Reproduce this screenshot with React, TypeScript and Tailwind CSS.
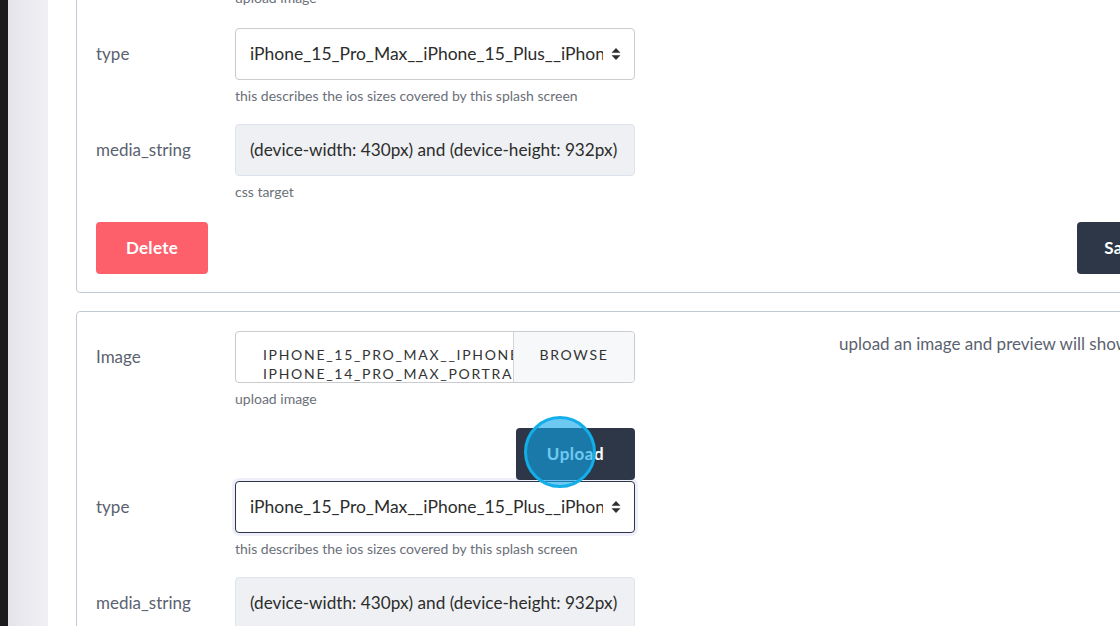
import React from "react";

const font = { fontFamily: "Lato, 'Liberation Sans', sans-serif" };

const selectText = "iPhone_15_Pro_Max__iPhone_15_Plus__iPhone_15__iPhone_14_Pro_Max";
const mediaText = "(device-width: 430px) and (device-height: 932px)";

function Arrows() {
  return (
    <svg width="10" height="14" viewBox="0 0 10 14" className="shrink-0 text-[#2f2f2f]">
      <path d="M5 1 L9.5 5.8 H0.5 Z" fill="currentColor" />
      <path d="M5 13 L9.5 8.2 H0.5 Z" fill="currentColor" />
    </svg>
  );
}

function Label({ children }: { children: React.ReactNode }) {
  return <div className="w-[139px] h-[52px] flex items-center text-[17px] text-[#5b6270]">{children}</div>;
}

function Help({ children }: { children: React.ReactNode }) {
  return <div className="mt-[6px] h-[20px] leading-[20px] text-[14px] text-[#6b7079]">{children}</div>;
}

function TypeSelect({ focused }: { focused?: boolean }) {
  return (
    <div
      className={`w-[400px] h-[52px] rounded-[4px] bg-white flex items-center pl-[14px] pr-[13px] gap-[8px] ${
        focused
          ? "border border-[#2d3748] shadow-[0_0_0_3px_rgba(120,120,220,0.12)]"
          : "border border-[#c9cbcf]"
      }`}
    >
      <div className="flex-1 overflow-hidden whitespace-nowrap text-[17.5px] text-[#2c2c2c]">{selectText}</div>
      <Arrows />
    </div>
  );
}

function MediaInput() {
  return (
    <div className="w-[400px] h-[52px] rounded-[4px] bg-[#eef0f3] border border-[#dde3ef] flex items-center px-[14px] text-[17.2px] text-[#2c2c2c] whitespace-nowrap overflow-hidden">
      {mediaText}
    </div>
  );
}

function TypeRow({ focused }: { focused?: boolean }) {
  return (
    <div className="flex items-start">
      <Label>type</Label>
      <div>
        <TypeSelect focused={focused} />
        <Help>this describes the ios sizes covered by this splash screen</Help>
      </div>
    </div>
  );
}

function MediaRow({ help = true }: { help?: boolean }) {
  return (
    <div className="flex items-start">
      <Label>media_string</Label>
      <div>
        <MediaInput />
        {help && <Help>css target</Help>}
      </div>
    </div>
  );
}

export default function App() {
  return (
    <div className="flex w-[1120px] h-[626px] overflow-hidden bg-white" style={font}>
      <div className="w-[8px] shrink-0 bg-[#1b1b1d]" />
      <div className="w-[40px] shrink-0 bg-gradient-to-r from-[#e4e4ea] to-[#f1f1f5]" />
      <div className="flex-1 pl-[28px] -mt-[13px] overflow-hidden">
        {/* card 1, scrolled so the top is out of view */}
        <div className="w-[1112px] border border-[#c4cad3] rounded-[4px] px-[19px] pb-[18px]">
          <div className="pl-[139px] h-[20px] leading-[20px] text-[14px] text-[#6b7079]">upload image</div>
          <div className="mt-[20px]">
            <TypeRow />
          </div>
          <div className="mt-[18px]">
            <MediaRow />
          </div>
          <div className="mt-[20px] flex justify-between">
            <button className="w-[112px] h-[52px] rounded-[4px] bg-[#fd5f6b] text-white text-[17px] font-bold tracking-[0.3px]">
              Delete
            </button>
            <button className="w-[91px] h-[52px] rounded-[4px] bg-[#2d3748] text-white text-[17px] font-bold tracking-[0.3px]">
              Save
            </button>
          </div>
        </div>

        {/* card 2 */}
        <div className="mt-[18px] w-[1112px] border border-[#c4cad3] rounded-[4px] px-[19px] pt-[19px] flex">
          <div className="w-[539px] shrink-0">
            <div className="flex items-start">
              <Label>Image</Label>
              <div>
                <div className="relative w-[400px] h-[52px] rounded-[4px] border border-[#c9cbcf] bg-white flex overflow-hidden">
                  <div className="flex-1 overflow-hidden pl-[27px] pt-[13px] text-[14px] leading-[19px] tracking-[1.7px] text-[#333] whitespace-nowrap">
                    <div>IPHONE_15_PRO_MAX__IPHONE_15_PLUS__IPHONE_15_PRO__</div>
                    <div>IPHONE_14_PRO_MAX_PORTRAIT.PNG</div>
                  </div>
                  <div className="w-[121px] shrink-0 border-l border-[#d2d4d8] bg-[#f7f8fa] flex justify-center pt-[13px] text-[14px] leading-[19px] tracking-[1.7px] text-[#333]">
                    BROWSE
                  </div>
                </div>
                <Help>upload image</Help>
              </div>
            </div>
            <div className="mt-[19px] flex justify-end">
              <div className="relative">
                <button className="w-[119px] h-[52px] rounded-[4px] bg-[#2d3748] text-white text-[17px] font-bold tracking-[0.5px] block">
                  Upload
                </button>
                <div className="absolute left-[8px] top-[-12px] w-[72px] h-[72px] rounded-full border-[3px] border-[#12aee8] bg-[rgba(14,165,233,0.6)]" />
              </div>
            </div>
            <div className="mt-[1px]">
              <TypeRow focused />
            </div>
            <div className="mt-[18px]">
              <MediaRow />
            </div>
          </div>
          <div className="ml-[204px] text-[17px] leading-[26px] text-[#5b6270] whitespace-nowrap">
            upload an image and preview will show here
          </div>
        </div>
      </div>
    </div>
  );
}
